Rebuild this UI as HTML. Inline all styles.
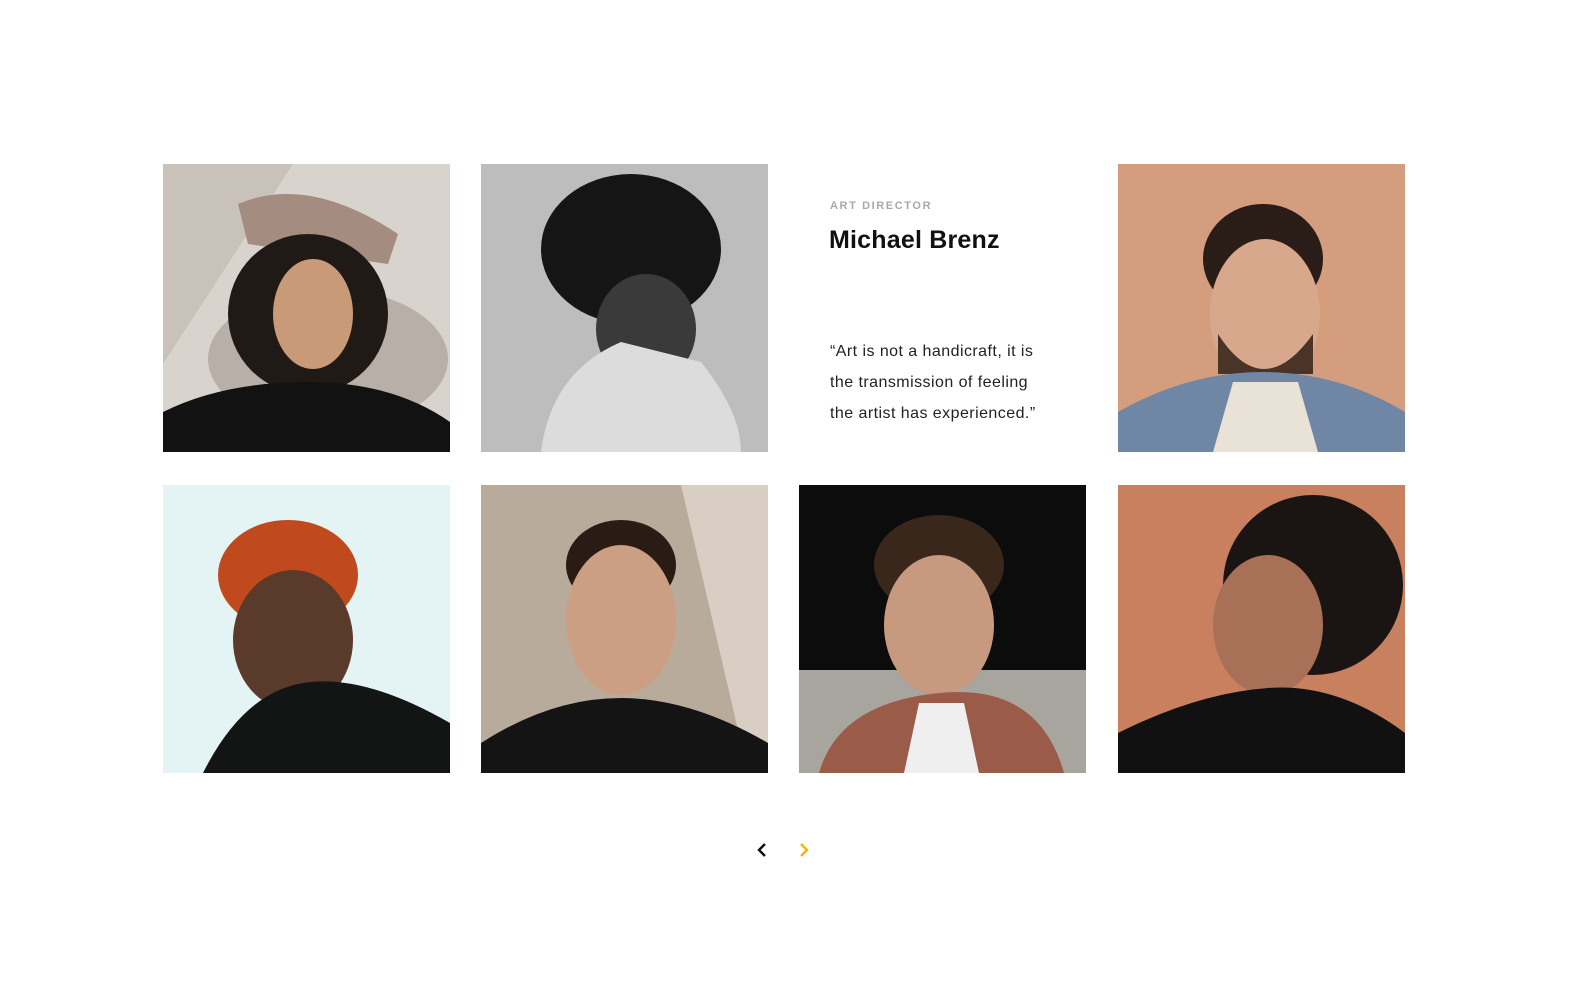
<!DOCTYPE html>
<html><head><meta charset="utf-8"><style>
html,body{margin:0;padding:0;background:#fff;width:1584px;height:1002px;overflow:hidden;font-family:"Liberation Sans",sans-serif}
.t{position:absolute;width:287px;height:288px;overflow:hidden}
.t svg{display:block}
.role{position:absolute;left:830px;top:200px;font-size:11px;letter-spacing:1.6px;color:#a8a8a8;font-weight:bold}
.name{position:absolute;left:829px;top:226px;font-size:25px;font-weight:bold;color:#111;letter-spacing:0.2px}
.quote{position:absolute;left:830px;top:337px;font-size:16px;line-height:30.8px;color:#222;width:215px;letter-spacing:0.45px}
</style></head><body>
<div class="t" style="left:163px;top:164px"><svg width="287" height="288"><rect width="287" height="288" fill="#d9d3cd"/><path d="M0 0h130L0 200z" fill="#c8c2bb"/><ellipse cx="165" cy="195" rx="120" ry="70" fill="#b8b0a8"/><path d="M75 40q70-30 160 30l-10 30-140-20z" fill="#a48c80"/><ellipse cx="145" cy="150" rx="80" ry="80" fill="#201a16"/><ellipse cx="150" cy="150" rx="40" ry="55" fill="#c89a78"/><path d="M0 288v-40q60-30 145-30t142 40v30z" fill="#121212"/></svg></div>
<div class="t" style="left:481px;top:164px"><svg width="287" height="288"><rect width="287" height="288" fill="#bdbdbd"/><ellipse cx="150" cy="85" rx="90" ry="75" fill="#151515"/><ellipse cx="165" cy="165" rx="50" ry="55" fill="#3a3a3a"/><path d="M60 288q10-80 80-110l80 20q40 50 40 90z" fill="#dcdcdc"/></svg></div>
<div class="t" style="left:1118px;top:164px"><svg width="287" height="288"><rect width="287" height="288" fill="#d49d7e"/><ellipse cx="145" cy="95" rx="60" ry="55" fill="#2a1c16"/><ellipse cx="147" cy="150" rx="55" ry="75" fill="#d8a88c"/><path d="M100 170q45 70 95 0v40h-95z" fill="#4a3428"/><path d="M0 288v-40q70-40 145-40t142 40v40z" fill="#6f87a4"/><path d="M95 288l20-70h65l20 70z" fill="#e9e2d6"/></svg></div>
<div class="t" style="left:163px;top:485px"><svg width="287" height="288"><rect width="287" height="288" fill="#e4f4f4"/><ellipse cx="125" cy="90" rx="70" ry="55" fill="#c04a1e"/><ellipse cx="130" cy="155" rx="60" ry="70" fill="#5a3a2a"/><path d="M40 288q40-80 100-90t147 40v50z" fill="#131515"/></svg></div>
<div class="t" style="left:481px;top:485px"><svg width="287" height="288"><rect width="287" height="288" fill="#b9ab9c"/><path d="M200 0h87v288h-20z" fill="#d8cec4"/><ellipse cx="140" cy="80" rx="55" ry="45" fill="#2a1c15"/><ellipse cx="140" cy="135" rx="55" ry="75" fill="#cc9f84"/><path d="M0 288v-30q70-45 140-45t147 45v30z" fill="#141414"/></svg></div>
<div class="t" style="left:799px;top:485px"><svg width="287" height="288"><rect width="287" height="288" fill="#0c0c0c"/><rect y="185" width="287" height="103" fill="#a8a49e"/><ellipse cx="140" cy="80" rx="65" ry="50" fill="#3a271c"/><ellipse cx="140" cy="140" rx="55" ry="70" fill="#c79a80"/><path d="M20 288q20-70 120-80t125 80z" fill="#9a5c48"/><path d="M105 288l15-70h45l15 70z" fill="#efefef"/></svg></div>
<div class="t" style="left:1118px;top:485px"><svg width="287" height="288"><rect width="287" height="288" fill="#c8805f"/><ellipse cx="195" cy="100" rx="90" ry="90" fill="#1a1412"/><ellipse cx="150" cy="140" rx="55" ry="70" fill="#a77057"/><path d="M0 288v-40q80-40 150-45t137 45v40z" fill="#111"/></svg></div>
<div class="role">ART DIRECTOR</div>
<div class="name">Michael Brenz</div>
<div class="quote">“Art is not a handicraft, it is the transmission of feeling the artist has experienced.”</div>
<svg style="position:absolute;left:756px;top:842px" width="12" height="16"><path d="M9 2L3 8l6 6" fill="none" stroke="#111" stroke-width="2.4"/></svg>
<svg style="position:absolute;left:798px;top:842px" width="12" height="16"><path d="M3 2l6 6-6 6" fill="none" stroke="#f2b705" stroke-width="2.4"/></svg>
</body></html>
